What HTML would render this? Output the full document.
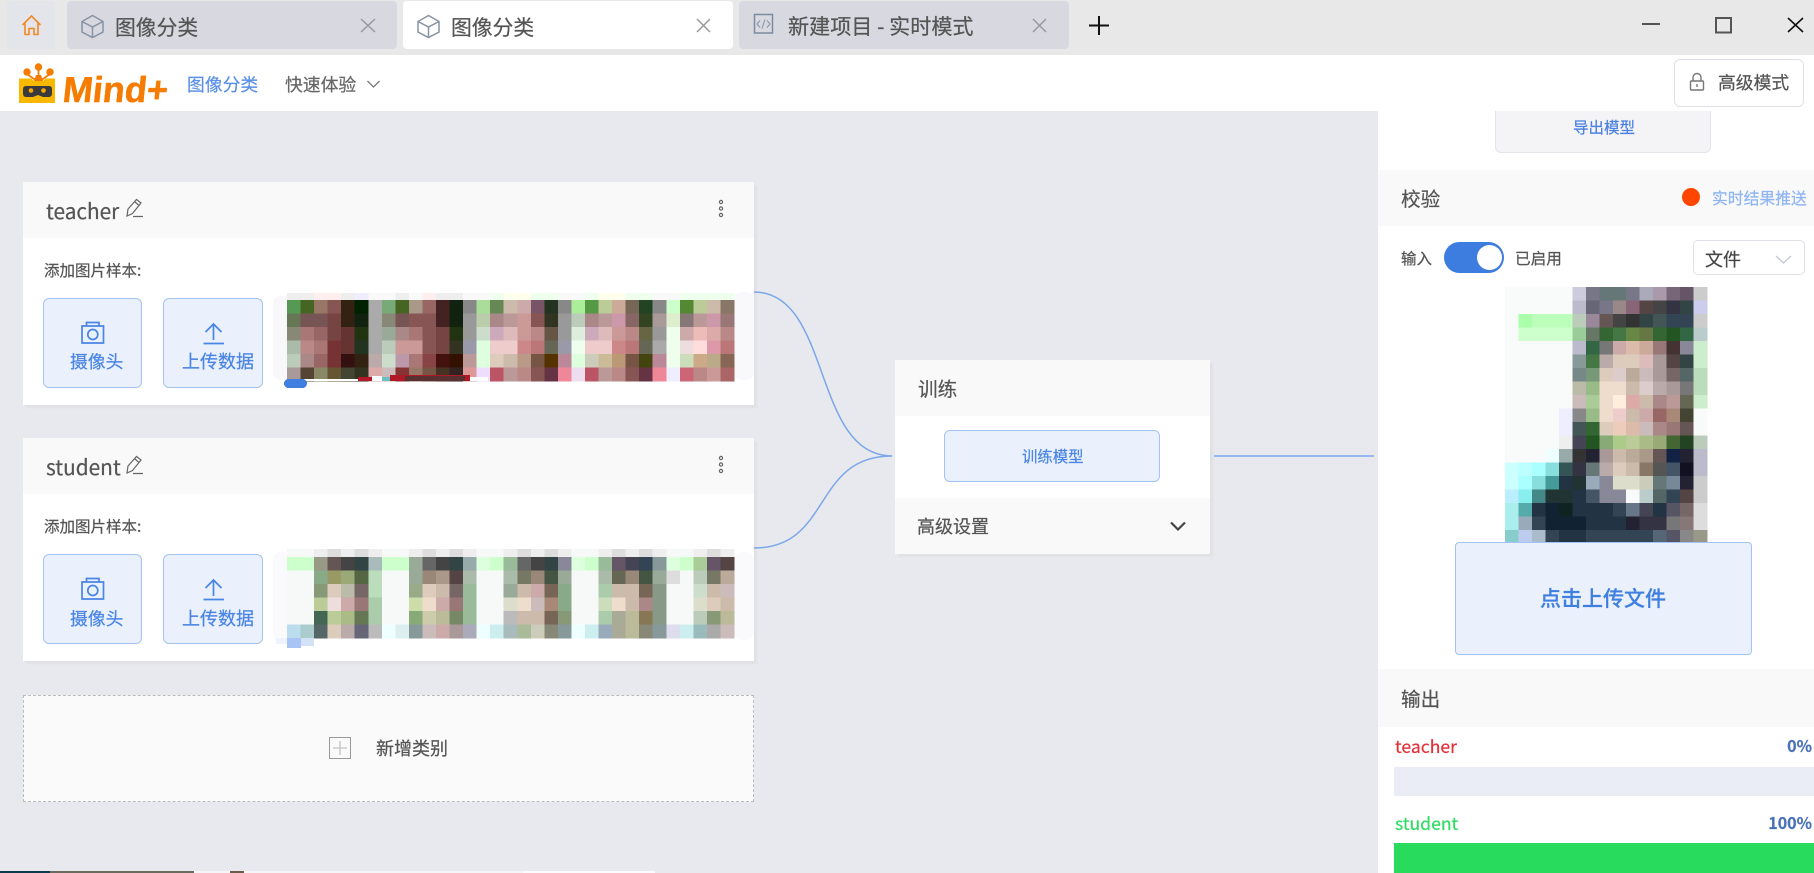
<!DOCTYPE html>
<html lang="zh-CN">
<head>
<meta charset="utf-8">
<title>Mind+</title>
<style>
html,body{margin:0;padding:0;width:1814px;height:873px;overflow:hidden;background:#e8e9ee}
body{position:relative;font-family:"Noto Sans CJK SC","Liberation Sans",sans-serif;color:#555}
.b{position:absolute;box-sizing:border-box}
.t{position:absolute;white-space:nowrap;line-height:30px;height:30px;-webkit-text-stroke:.22px currentColor}
.tab{background:#d7d8e0;border-radius:4px;top:1px;height:48px}
.card{background:#fff;box-shadow:3px 3px 2px rgba(0,0,0,.035)}
.head{background:#f9f9f9}
.btn{background:#eaf1fc;border:1px solid #a3c3f3;border-radius:6px}
.blue{color:#4a85e5}
svg{position:absolute;left:0;top:0}
</style>
</head>
<body>
<!-- title bar -->
<div class="b" style="left:0;top:0;width:1814px;height:55px;background:#e8e8e8"></div>
<div class="b" style="left:7px;top:1px;width:48px;height:48px;background:#e4e5eb;border-radius:3px"></div>
<div class="b tab" style="left:67px;width:330px"></div>
<div class="b tab" style="left:403px;width:330px;background:#fff"></div>
<div class="b tab" style="left:739px;width:330px"></div>
<div class="t" style="left:115px;top:11px;font-size:20.8px">图像分类</div>
<div class="t" style="left:451px;top:11px;font-size:20.8px">图像分类</div>
<div class="t" style="left:788px;top:11px;font-size:21.1px">新建项目 - 实时模式</div>

<!-- header -->
<div class="b" style="left:0;top:55px;width:1814px;height:56px;background:#fff"></div>
<div class="t" style="left:63px;top:72px;font-family:'Liberation Sans',sans-serif;font-weight:700;font-size:36px;color:#f57c00;line-height:36px;height:36px;transform:skewX(-6deg);-webkit-text-stroke:.5px #f57c00">Mind+</div>
<div class="t" style="left:187px;top:69px;font-size:17.8px;color:#5a90e8">图像分类</div>
<div class="t" style="left:285px;top:69px;font-size:17.8px;color:#666">快速体验</div>
<div class="b" style="left:1674px;top:59px;width:130px;height:48px;background:#fff;border:1px solid #e0e0e8;border-radius:6px"></div>
<div class="t" style="left:1718px;top:67px;font-size:17.8px;color:#555">高级模式</div>

<!-- right panel -->
<div class="b" style="left:1378px;top:111px;width:436px;height:762px;background:#fff"></div>
<div class="b" style="left:1495px;top:111px;width:216px;height:42px;background:#f4f4f6;border:1px solid #e4e4ea;border-top:0;border-radius:0 0 6px 6px"></div>
<div class="t" style="left:1573px;top:112px;font-size:15.5px;color:#4a80e0">导出模型</div>
<div class="b" style="left:1378px;top:170px;width:436px;height:56px;background:#f9f9fa"></div>
<div class="t" style="left:1401px;top:183px;font-size:19.6px">校验</div>
<div class="b" style="left:1682px;top:188px;width:18px;height:18px;border-radius:50%;background:#ff4500"></div>
<div class="t" style="left:1712px;top:183px;font-size:15.8px;color:#8fb5f2">实时结果推送</div>
<div class="t" style="left:1401px;top:243px;font-size:15.5px">输入</div>
<div class="b" style="left:1444px;top:242px;width:60px;height:31px;border-radius:16px;background:#3e7de0"></div>
<div class="b" style="left:1477px;top:245px;width:25px;height:25px;border-radius:50%;background:#fff"></div>
<div class="t" style="left:1515px;top:243px;font-size:15.6px">已启用</div>
<div class="b" style="left:1693px;top:240px;width:112px;height:35px;background:#fff;border:1px solid #e0e0e8;border-radius:5px"></div>
<div class="t" style="left:1705px;top:244px;font-size:18px;color:#444">文件</div>

<!-- output -->
<div class="b" style="left:1378px;top:669px;width:436px;height:58px;background:#f9f9fa"></div>
<div class="t" style="left:1401px;top:683px;font-size:19.6px">输出</div>
<div class="t" style="left:1395px;top:732px;font-size:17.6px;color:#e3303a">teacher</div>
<div class="t" style="right:2px;top:730px;font-size:16px;font-weight:700;color:#4a72b8">0%</div>
<div class="b" style="left:1394px;top:767px;width:420px;height:29px;background:#eaedf5"></div>
<div class="t" style="left:1395px;top:809px;font-size:17.6px;color:#2fdc62">student</div>
<div class="t" style="right:2px;top:807px;font-size:16px;font-weight:700;color:#4a72b8">100%</div>
<div class="b" style="left:1394px;top:843px;width:420px;height:30px;background:#28db5c"></div>

<!-- teacher card -->
<div class="b card" style="left:23px;top:182px;width:731px;height:223px"></div>
<div class="b head" style="left:23px;top:182px;width:731px;height:56px"></div>
<div class="t" style="left:46px;top:195px;font-size:20.8px">teacher</div>
<div class="t" style="left:44px;top:255px;font-size:15.5px">添加图片样本:</div>
<div class="b btn" style="left:43px;top:298px;width:99px;height:90px"></div>
<div class="b btn" style="left:163px;top:298px;width:100px;height:90px"></div>
<div class="t blue" style="left:70px;top:346px;font-size:17.8px">摄像头</div>
<div class="t blue" style="left:182px;top:346px;font-size:18px">上传数据</div>

<!-- student card -->
<div class="b card" style="left:23px;top:438px;width:731px;height:223px"></div>
<div class="b head" style="left:23px;top:438px;width:731px;height:56px"></div>
<div class="t" style="left:46px;top:451px;font-size:20.8px">student</div>
<div class="t" style="left:44px;top:511px;font-size:15.5px">添加图片样本:</div>
<div class="b btn" style="left:43px;top:554px;width:99px;height:90px"></div>
<div class="b btn" style="left:163px;top:554px;width:100px;height:90px"></div>
<div class="t blue" style="left:70px;top:603px;font-size:17.8px">摄像头</div>
<div class="t blue" style="left:182px;top:603px;font-size:18px">上传数据</div>

<!-- add category -->
<div class="b" style="left:23px;top:695px;width:731px;height:107px;background:#fafafa;border:1px dashed #bbb"></div>
<div class="t" style="left:376px;top:733px;font-size:18px">新增类别</div>

<!-- train card -->
<div class="b card" style="left:895px;top:360px;width:315px;height:194px"></div>
<div class="b head" style="left:895px;top:360px;width:315px;height:56px"></div>
<div class="t" style="left:918px;top:373px;font-size:19.6px">训练</div>
<div class="b btn" style="left:944px;top:430px;width:216px;height:52px"></div>
<div class="t blue" style="left:1022px;top:441px;font-size:15.4px">训练模型</div>
<div class="b head" style="left:895px;top:498px;width:315px;height:56px"></div>
<div class="t" style="left:917px;top:511px;font-size:18px">高级设置</div>

<!-- bottom strip -->
<div class="b" style="left:0;top:871px;width:50px;height:2px;background:#0e3a4e"></div>
<div class="b" style="left:50px;top:871px;width:144px;height:2px;background:#6a6a5e"></div>
<div class="b" style="left:194px;top:871px;width:329px;height:2px;background:#f5f5f7"></div>
<div class="b" style="left:230px;top:871px;width:14px;height:2px;background:#6b5b4a"></div>
<div class="b" style="left:523px;top:871px;width:132px;height:2px;background:#fbfbfd"></div>

<svg id="art" width="1814" height="873" viewBox="0 0 1814 873" xmlns="http://www.w3.org/2000/svg">
  <g id="mos" shape-rendering="crispEdges"></g>

  <!-- connectors -->
  <g fill="none" stroke="#7ba7e8" stroke-width="1.5">
    <path d="M754 292C832 292 812 456 892 456"/>
    <path d="M754 548C832 548 812 456 892 456"/>
    <path d="M1214 456H1374"/>
  </g>

  <!-- home -->
  <path d="M22.5 25L31.5 16L40.5 25M25 23V34.500H29V28.500H34V34.500H38V23" fill="none" stroke="#f08a24" stroke-width="1.6"/>

  <!-- cube icons -->
  <g fill="none" stroke="#8793a3" stroke-width="1.5">
    <path d="M92.500 15.500L103 21.500V32L92.500 37.500L82 32V21.500ZM82 21.500L92.500 27L103 21.500M92.500 27V37.500"/>
    <path d="M428.500 15.500L439 21.500V32L428.500 37.500L418 32V21.500ZM418 21.500L428.500 27L439 21.500M428.500 27V37.500"/>
    <rect x="754.500" y="14.500" width="18" height="18.500" stroke="#7d8ba0"/>
    <path d="M760 20.500L757 24L760 27.500M767 20.500L770 24L767 27.500M765 19.500L762 28.500" stroke-width="1"/>
  </g>

  <!-- close icons -->
  <g fill="none" stroke="#999" stroke-width="1.5">
    <path d="M361 19L375 32M375 19L361 32"/>
    <path d="M697 19L710 32M710 19L697 32"/>
    <path d="M1033 19L1046 32M1046 19L1033 32"/>
  </g>
  <path d="M1089 25.500H1109M1099 16V35" stroke="#111" stroke-width="2" fill="none"/>

  <!-- window controls -->
  <path d="M1642 24H1660" stroke="#222" stroke-width="1.5"/>
  <rect x="1716" y="18" width="15" height="14.500" fill="none" stroke="#555" stroke-width="2"/>
  <path d="M1788 18L1803 32M1803 18L1788 32" stroke="#111" stroke-width="1.6" fill="none"/>

  <!-- logo -->
  <g>
    <path d="M19 78.500H31L34 81H43L46 78.500H55V103H19Z" fill="#f9b800"/>
    <path d="M34 81L36 75H41L43 81Z" fill="#f57c00"/>
    <circle cx="27" cy="72" r="3.700" fill="#f57c00"/><circle cx="38.500" cy="67" r="3.700" fill="#f57c00"/><circle cx="50" cy="72" r="3.700" fill="#f57c00"/>
    <path d="M27 74L34 79H43L50 74M38.500 70V76" stroke="#f57c00" stroke-width="1.700" fill="none"/>
    <path d="M26 86H49Q52 86 52 89V93Q52 97 49 97H43L38 95 33 97H26Q23 97 23 93V89Q23 86 26 86Z" fill="#3a3a3c"/>
    <circle cx="31" cy="90.500" r="2.300" fill="#f9a800"/><circle cx="43.500" cy="90.500" r="2.300" fill="#f9a800"/>
  </g>

  <!-- header icons -->
  <path d="M367.500 81L373.500 87L379.500 81" fill="none" stroke="#777" stroke-width="1.300"/>
  <g fill="none" stroke="#777" stroke-width="1.400">
    <rect x="1690.500" y="81" width="13" height="9" rx="1"/>
    <path d="M1693 81V77.500A4 4 0 0 1 1701 77.500V81"/>
    <path d="M1697 84V87"/>
  </g>
  <path d="M1776 256L1783.500 263L1791 256" fill="none" stroke="#c4c8d0" stroke-width="1.300"/>

  <!-- pencil + dots -->
  <g fill="none" stroke="#666" stroke-width="1.200">
    <path d="M127 216L128 209L136.500 199.500L141 203L132.500 213.500ZM134.500 201.500L139 205.500M133 216.500H143"/>
    <path d="M127 473L128 466L136.500 456.500L141 460L132.500 470.500ZM134.500 458.500L139 462.500M133 473.500H143"/>
    <circle cx="721" cy="202" r="1.600"/><circle cx="721" cy="208.500" r="1.600"/><circle cx="721" cy="215" r="1.600"/>
    <circle cx="721" cy="458" r="1.600"/><circle cx="721" cy="464.500" r="1.600"/><circle cx="721" cy="471" r="1.600"/>
  </g>

  <!-- camera + upload -->
  <g fill="none" stroke="#4a85e5" stroke-width="1.700">
    <path d="M82 326H103.500V343H82ZM86.500 326V322.500H99V326"/>
    <circle cx="92.800" cy="334.500" r="5"/>
    <path d="M205.500 332L213.500 324L221.500 332M213.500 324V340M203.500 343.500H224"/>
    <path d="M82 582H103.500V599H82ZM86.500 582V578.500H99V582"/>
    <circle cx="92.800" cy="590.500" r="5"/>
    <path d="M205.500 588L213.500 580L221.500 588M213.500 580V596M203.500 599.500H224"/>
  </g>

  <!-- add -->
  <rect x="329.500" y="737.500" width="21" height="21" fill="none" stroke="#999"/>
  <path d="M333 748H347M340 741V755" stroke="#ccc" stroke-width="1.600"/>

  <!-- chevron -->
  <path d="M1171 522.500L1178 529.500L1185 522.500" fill="none" stroke="#444" stroke-width="2.200"/>
</svg>

<!-- upload button on right (above picture) -->
<div class="b btn" style="left:1455px;top:542px;width:297px;height:113px;border-radius:4px"></div>
<div class="t" style="left:1540px;top:583px;font-size:21px;color:#3f7fe0;font-weight:500">点击上传文件</div>

<script>
(function(){
var NS="http://www.w3.org/2000/svg",g=document.getElementById("mos");
function r(x,y,w,h,f,rx){var e=document.createElementNS(NS,"rect");e.setAttribute("x",x);e.setAttribute("y",y);e.setAttribute("width",w);e.setAttribute("height",h);e.setAttribute("fill",f);if(rx)e.setAttribute("rx",rx);g.appendChild(e);}
function m(x0,y0,cw,rows,hs,wh){var y=y0;rows.forEach(function(s,ri){var a=s.split(" "),h=hs[ri]||hs[hs.length-1];a.forEach(function(c,i){var f=c==="fff"?wh:"#"+c;r((x0+i*cw).toFixed(2),y.toFixed(2),(cw+.6).toFixed(2),(h+.6).toFixed(2),f);});y+=h;});}

/* faint blobs */
r(273,296,20,84,"#f8f8fa",8);r(734,292,20,88,"#f9f9fb",8);
r(273,552,18,90,"#fafafc",8);r(734,552,20,88,"#fafafc",8);

m(287,293,13.545,[
"eee eee fee fee eee eef fff fff eee fff fee eee eee fff fff efe ffe ffe efe efe fff fff efe ffe ffe efe efe fff fff efe efe efe efe",
"595 462 976 855 321 020 aaa 7a7 462 a98 966 422 121 888 ad9 685 cba caa 756 232 888 ae9 594 bc9 ca9 765 242 888 cfc 583 bc9 cba 876",
"675 755 755 744 321 121 aaa 887 755 855 855 422 121 999 bca a88 b99 c99 855 332 999 bcb a88 b99 c9a 866 342 a99 dec 877 b99 c9a 977",
"887 a77 966 744 633 231 aaa 9a9 a88 a77 855 744 231 999 cdc cab dbb c99 b88 654 999 ded cab dbb c99 b88 664 999 efe caa ebb daa b88",
"aba b88 a77 733 633 232 aaa bcb c99 c99 855 744 332 99a dfd ecc ecc c88 b77 665 99a efe ecc ecc c88 b77 665 aaa efe edd fdd d9a b77",
"bcb a88 966 733 311 321 baa cdc b9a a77 844 411 310 b99 dfd dcb cba b98 754 530 b89 dfd ccb cb9 b97 754 441 b89 efe cdb ca8 ba8 865",
"a99 543 886 653 443 332 daa cbb 833 976 754 432 322 d99 edf b56 b99 b88 855 634 e89 ede b56 b99 b88 855 634 e89 eef c67 b88 c99 a66"
],[7,13.5],"#f9f9f9");
/* clothes under first photos */
r(287,379,76,2,"#ffffff");r(358,377,14,4,"#b01828");r(372,376,10,5,"#ffffff");r(382,377,8,4,"#6cc0c4");
r(390,375,80,6,"#b01828");r(405,376,60,5,"#5a2f2f");r(470,377,18,4,"#ffffff");
r(284,379,23,9,"#3f7fe0",4.5);

m(287,549,13.545,[
"fff fff eee ddd eee ddd eee fff fff eee ddd eee ddd eee fff fff eee ddd eee ddd eee fff fff eee ddd eee ddd eee fff fff eee ddd eee",
"cfc cfc 998 655 444 344 abb cfc cfc 9a9 666 444 344 9aa dfd cfc 9b9 666 444 344 889 dfd cfc 9b9 656 445 345 899 dfd cfc ac9 656 544",
"fff fff 8a8 996 9a7 564 bdb fff fff 9a9 987 a98 544 aba fff fff aba 776 987 454 9a9 fff fff aba 665 987 454 9a9 ddd fff bcb 776 ba9",
"fff fff 897 dcb bba 766 bdb fff fff 9a8 dcb cba 766 9b9 fff fff 9a9 cba caa 765 8a8 fff fff aca cba cba 765 898 fff fff cdc cba cbb",
"fff fff bc9 edd caa 977 aca fff fff cda edc caa 977 9b9 fff fff ddc edc cbb a87 8a8 fff fff cdb edc cba a88 898 fff fff ddc dcb cba",
"fff fff 465 bc9 ab8 675 aca fff fff 8a7 cca bb9 786 9b9 fff fff bbb cba cba 765 897 fff fff aca aa9 bb9 875 898 fff fff bcb 897 bb9",
"bde acc 566 dcb baa 667 bbb eff dee 899 cbb caa a99 aab eff cee abb ab9 ccb 887 899 eff cee 9ab aa9 bb9 887 899 dde cee 9bb aaa cbb"
],[8,13.5],"#f7f9f8");
r(287,638,14,10,"#a8c4f4");r(301,638,13,8,"#d4e2f8");r(276,638,11,6,"#eef3fc");

m(1505,287,13.47,[
"fff fff fff fff fff ccd 778 677 677 778 aab a9a 767 656 ccc",
"fff fff fff fff fff bbc 667 778 988 867 544 444 334 344 cce",
"fff afa bfb bfb bfb bcb 989 655 444 333 344 455 345 345 ccc",
"fff cfc cfc cfc cfc 9c9 676 363 474 684 674 363 252 364 bcc",
"fff fff fff fff fff bbc 364 777 caa dba ca9 977 433 889 cec",
"fff fff fff fff fff 899 474 baa dcb dcb dbb a99 544 344 cec",
"fff fff fff fff fff 788 797 dcb dcc ba9 cbb a99 766 566 bdb",
"fff fff fff fff fff bba 9b8 edc edc cba dcc baa a99 777 bdb",
"fff fff fff fff fff cbb ac9 edc fed daa cba a88 b99 665 cec",
"fff fff fff fff eef 888 9b8 edc ecc cba caa 966 a87 443 fff",
"fff fff fff fff eef 455 363 dcb ecb dba cbb a88 977 655 fff",
"fff fff fff fff eee 445 252 8a7 ac8 bc9 ab8 9a7 463 242 bcb",
"fff fff fff eff 9aa 333 223 a99 cba ba9 a98 655 124 223 bbc",
"cff bff aff 8dd 355 334 677 baa dcb cba 876 555 456 112 bbc",
"cff aff 8dd 499 234 233 9ab 889 ddc ddc ccb 677 789 223 ccc",
"bef 8ee 488 233 233 234 456 889 889 fff bcc 566 345 544 ccc",
"aee 5aa 234 123 122 234 234 234 345 678 445 234 556 766 ddd",
"aee 9ab 345 123 123 123 234 234 234 223 334 334 777 877 ddd",
"8cc bce abc 345 234 234 345 345 345 345 345 567 556 888 998"
],[13.5],"#f8fbf9");
})();
</script>
</body>
</html>
